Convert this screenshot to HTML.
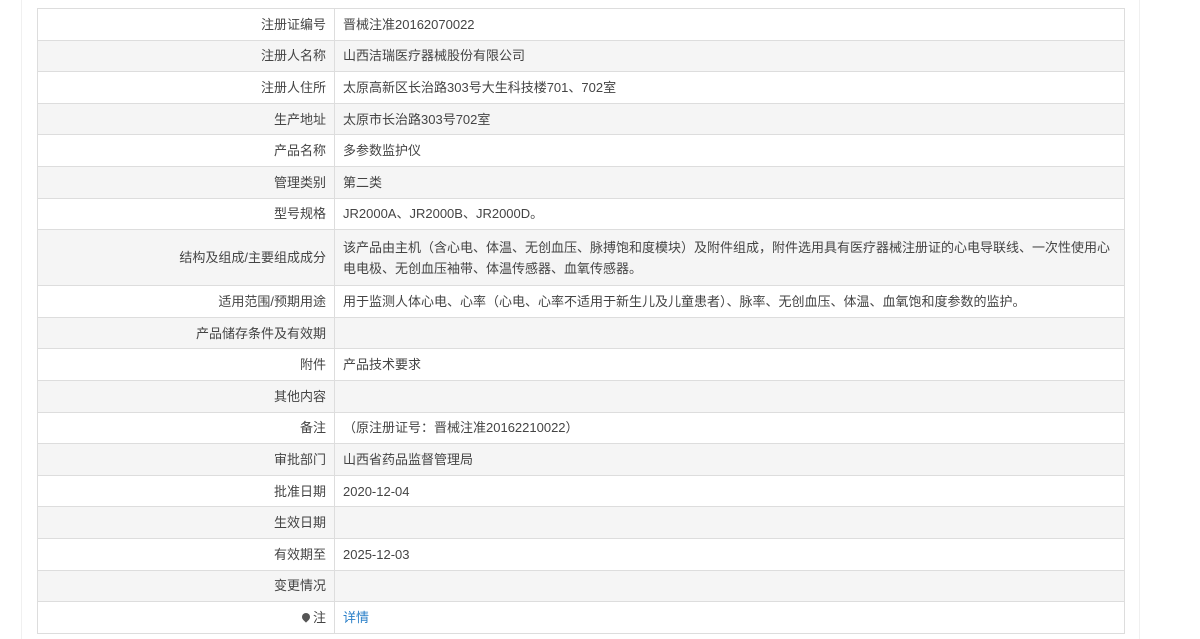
<!DOCTYPE html>
<html><head><meta charset="utf-8"><style>
html,body{margin:0;padding:0;background:#fff;width:1200px;height:639px;overflow:hidden}
body{font-family:"Liberation Sans","Microsoft YaHei","Noto Sans CJK SC",sans-serif;font-size:13px;color:#444;position:relative}
.vl{position:absolute;top:0;bottom:0;width:1px;background:#f0f0f0}
table{position:absolute;left:37px;top:8px;width:1088px;border-collapse:collapse;border:1px solid #d6d6d6}
tr{height:31.6px}
td{border:1px solid #ddd;padding:0 8px;line-height:21px;box-sizing:border-box}
td.l{width:297px;text-align:right}
tr:nth-child(even) td{background:#f5f5f5}
tr.t{height:56px}
a{color:#2a7fc8;text-decoration:none}
.pin{display:inline-block;width:8px;height:8px;background:#555;border-radius:50% 50% 50% 0;transform:rotate(-45deg);margin-right:3px;position:relative;top:-1px}
</style></head><body>
<div class="vl" style="left:21px"></div><div class="vl" style="left:1139px"></div>
<table>
<tr><td class="l">注册证编号</td><td>晋械注准20162070022</td></tr>
<tr><td class="l">注册人名称</td><td>山西洁瑞医疗器械股份有限公司</td></tr>
<tr><td class="l">注册人住所</td><td>太原高新区长治路303号大生科技楼701、702室</td></tr>
<tr><td class="l">生产地址</td><td>太原市长治路303号702室</td></tr>
<tr><td class="l">产品名称</td><td>多参数监护仪</td></tr>
<tr><td class="l">管理类别</td><td>第二类</td></tr>
<tr><td class="l">型号规格</td><td>JR2000A、JR2000B、JR2000D。</td></tr>
<tr class="t"><td class="l">结构及组成/主要组成成分</td><td>该产品由主机（含心电、体温、无创血压、脉搏饱和度模块）及附件组成，附件选用具有医疗器械注册证的心电导联线、一次性使用心电电极、无创血压袖带、体温传感器、血氧传感器。</td></tr>
<tr><td class="l">适用范围/预期用途</td><td>用于监测人体心电、心率（心电、心率不适用于新生儿及儿童患者）、脉率、无创血压、体温、血氧饱和度参数的监护。</td></tr>
<tr><td class="l">产品储存条件及有效期</td><td></td></tr>
<tr><td class="l">附件</td><td>产品技术要求</td></tr>
<tr><td class="l">其他内容</td><td></td></tr>
<tr><td class="l">备注</td><td>（原注册证号：晋械注准20162210022）</td></tr>
<tr><td class="l">审批部门</td><td>山西省药品监督管理局</td></tr>
<tr><td class="l">批准日期</td><td>2020-12-04</td></tr>
<tr><td class="l">生效日期</td><td></td></tr>
<tr><td class="l">有效期至</td><td>2025-12-03</td></tr>
<tr><td class="l">变更情况</td><td></td></tr>
<tr><td class="l"><span class="pin"></span>注</td><td><a>详情</a></td></tr>
</table>
</body></html>
